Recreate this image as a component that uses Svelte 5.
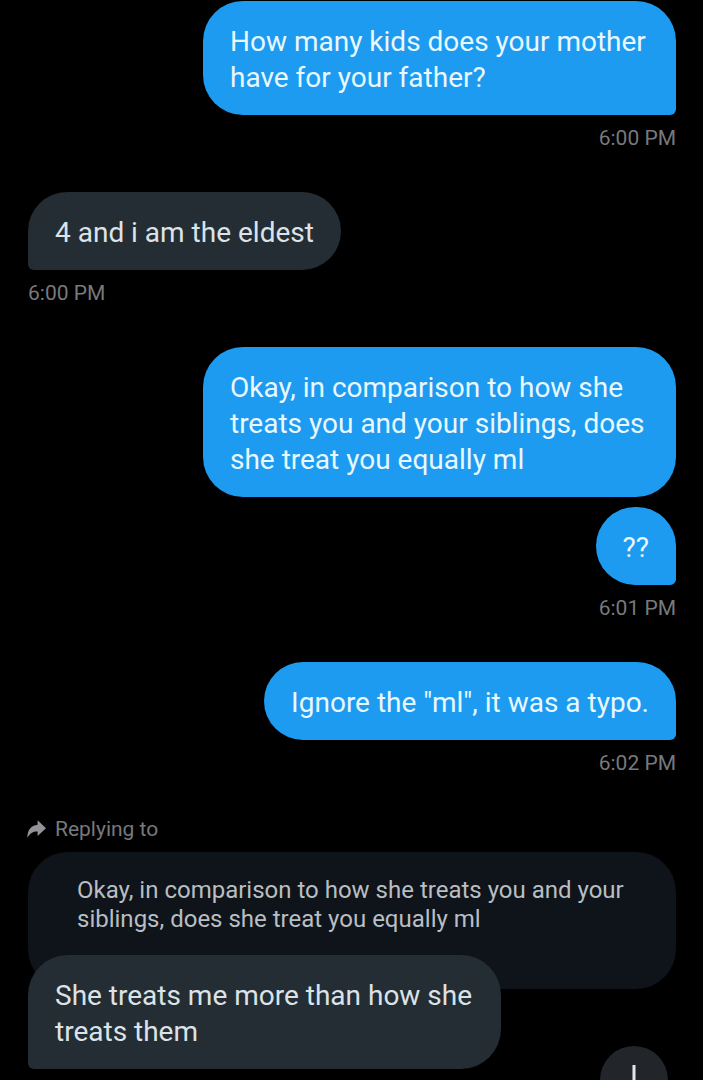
<script>
  const groups = [
    { side: 'sent', time: '6:00 PM', messages: ['How many kids does your mother have for your father?'] },
    { side: 'received', time: '6:00 PM', messages: ['4 and i am the eldest'] },
    {
      side: 'sent',
      time: '6:01 PM',
      messages: [
        'Okay, in comparison to how she treats you and your siblings, does she treat you equally ml',
        '??'
      ]
    },
    { side: 'sent', time: '6:02 PM', messages: ['Ignore the "ml", it was a typo.'] }
  ];

  const reply = {
    quote: 'Okay, in comparison to how she treats you and your siblings, does she treat you equally ml',
    text: 'She treats me more than how she treats them'
  };

  function scrollToLatest() {
    window.scrollTo({ top: document.body.scrollHeight, behavior: 'smooth' });
  }
</script>

<main class="thread">
  {#each groups as group}
    <section class="group {group.side}">
      <div class="stack">
        {#each group.messages as message, i}
          <p class="bubble" class:tail={i === group.messages.length - 1}>{message}</p>
        {/each}
      </div>
      <time>{group.time}</time>
    </section>
  {/each}

  <section class="group received">
    <div class="replying">
      <svg viewBox="0 0 20 20" width="20" height="20" aria-hidden="true">
        <path d="M10.6 1.2 19 9.2 10.6 17v-4.4C6.5 12.4 3 14 0.4 19 0.2 11.5 3.8 6.2 10.6 5.8z" />
      </svg>
      <span>Replying to</span>
    </div>
    <blockquote>{reply.quote}</blockquote>
    <p class="bubble tail overlap">{reply.text}</p>
  </section>
</main>

<button class="jump" aria-label="Scroll to latest message" onclick={scrollToLatest}>
  <svg viewBox="0 0 32 32" width="32" height="32" aria-hidden="true">
    <path d="M16 1v28M5 18l11 11 11-11" />
  </svg>
</button>

<style>
  :global(body) {
    background: #000;
  }

  .thread {
    display: flex;
    flex-direction: column;
    gap: 42px;
    padding: 1px 27px 10px 28px;
    font-family: Roboto, 'Liberation Sans', sans-serif;
  }

  .group,
  .stack {
    display: flex;
    flex-direction: column;
    align-items: flex-start;
  }

  .sent,
  .sent .stack {
    align-items: flex-end;
  }

  .stack {
    gap: 10px;
    width: 100%;
  }

  .bubble {
    box-sizing: border-box;
    max-width: 73%;
    margin: 0;
    padding: 23px 27px 19px;
    border-radius: 40px;
    background: #242d34;
    color: #dce3e8;
    font-size: 28px;
    line-height: 36px;
  }

  .sent .bubble {
    background: #1d9bf0;
    color: #e9f8ff;
  }

  .received .tail {
    border-bottom-left-radius: 6px;
  }

  .sent .tail {
    border-bottom-right-radius: 6px;
  }

  time {
    margin-top: 11px;
    color: #77797c;
    font-size: 21px;
    line-height: 24px;
  }

  .replying {
    display: flex;
    align-items: center;
    gap: 8px;
    margin-bottom: 11px;
    color: #77797c;
    font-size: 21px;
    line-height: 24px;
  }

  .replying svg {
    margin-left: -1px;
    fill: #929497;
  }

  blockquote {
    box-sizing: border-box;
    width: 100%;
    margin: 0;
    padding: 24px 44px 55px 49px;
    border-radius: 40px;
    background: #0f141a;
    color: #b9bec2;
    font-size: 24px;
    line-height: 29px;
  }

  .overlap {
    margin-top: -34px;
  }

  .jump {
    position: fixed;
    right: 35px;
    bottom: -34px;
    display: grid;
    place-items: center;
    width: 68px;
    height: 68px;
    padding: 0;
    border: 0;
    border-radius: 50%;
    background: #22262a;
  }

  .jump svg {
    fill: none;
    stroke: #e4e7e9;
    stroke-width: 3;
  }
</style>
